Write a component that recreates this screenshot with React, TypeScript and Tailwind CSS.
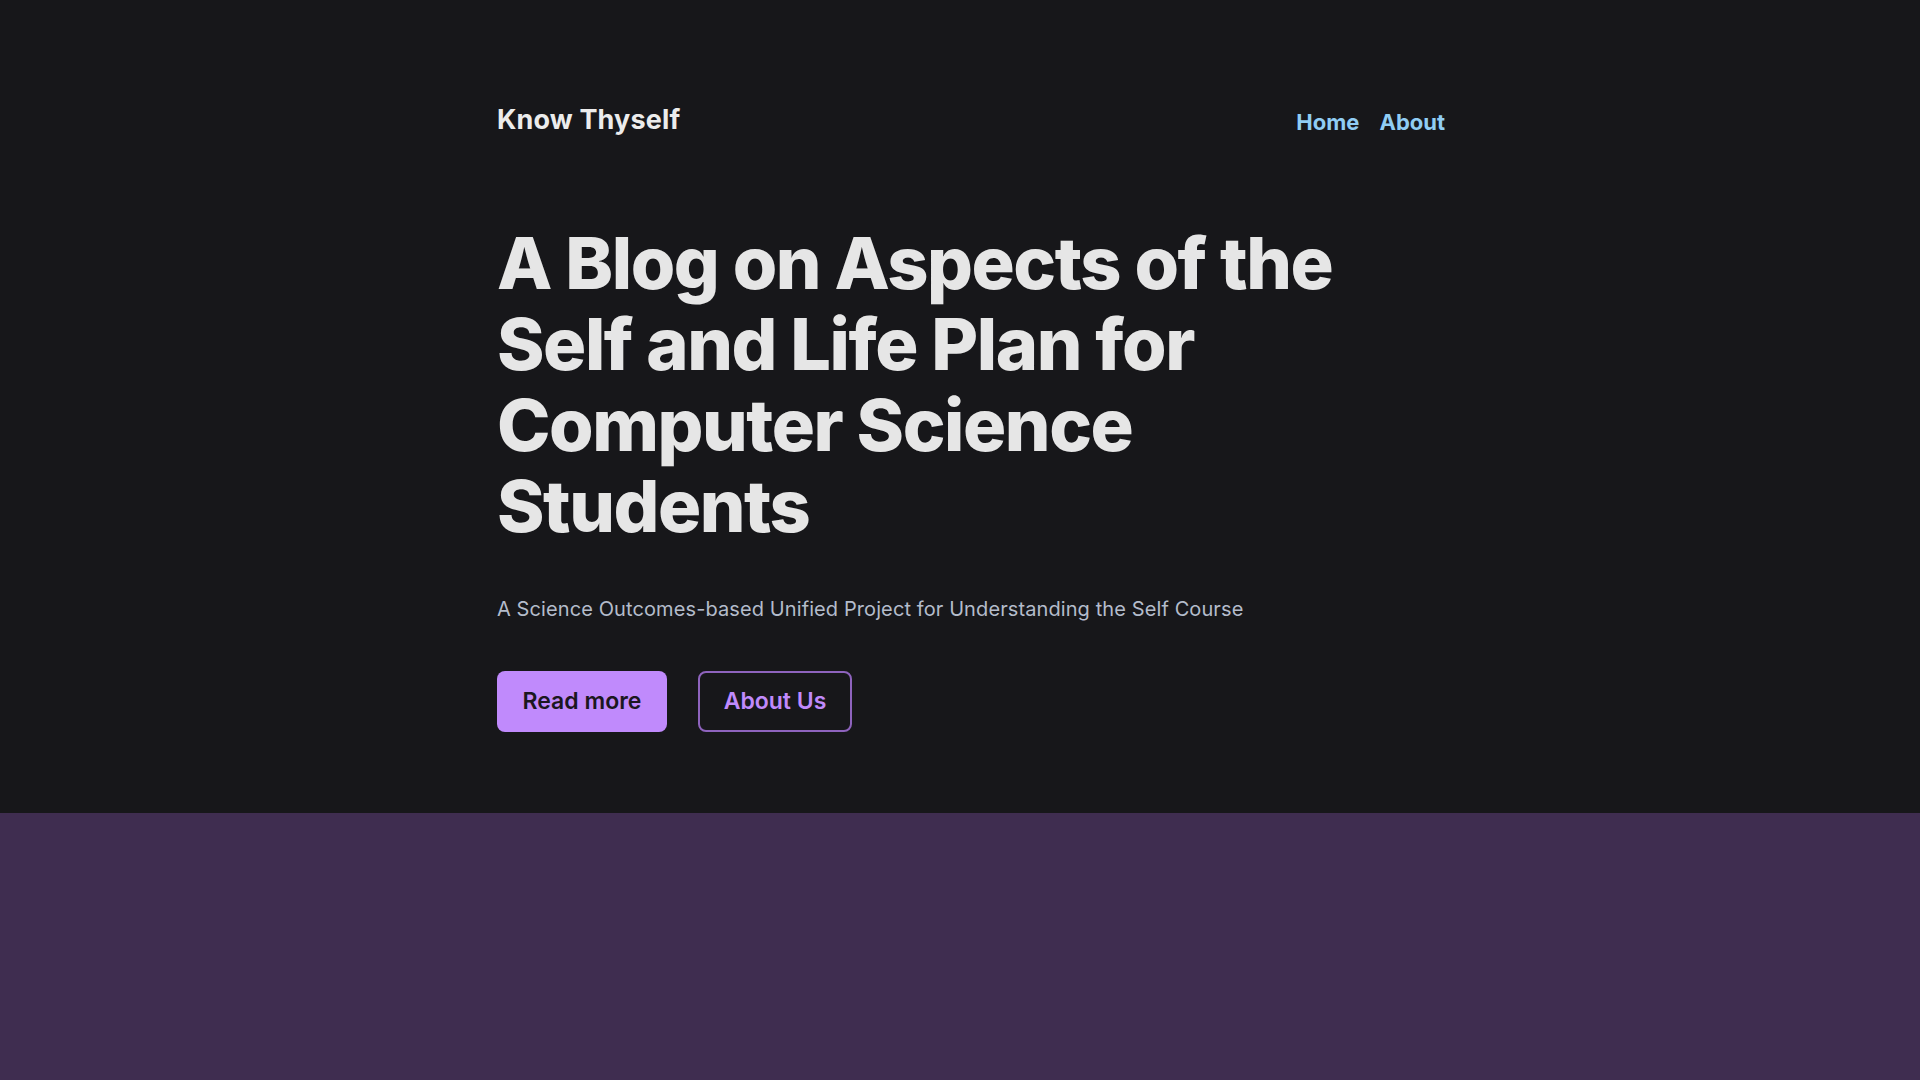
export default function App() {
  return (
    <div className="min-h-screen bg-[#3f2d50] font-['Inter',sans-serif]">
      <section className="bg-[#17171a] pb-[81px] pt-[104px]">
        <div className="ml-[497px] w-[948px]">
          <header className="flex items-center justify-between">
            <a className="text-[27px] font-bold leading-8 tracking-[0.005em] text-[#ececec]">Know Thyself</a>
            <nav className="flex items-center gap-5 pt-1">
              <a className="text-[22px] font-bold leading-7 text-[#90cdf4]">Home</a>
              <a className="text-[22px] font-bold leading-7 text-[#90cdf4]">About</a>
            </nav>
          </header>

          <h1 className="mt-[86px] text-[72px] font-extrabold leading-[81px] tracking-[-0.02em] text-[#e6e6e6]">
            A Blog on Aspects of the
            <br />
            Self and Life Plan for
            <br />
            Computer Science
            <br />
            Students
          </h1>

          <p className="mt-[49px] text-[20px] leading-7 tracking-[0.005em] text-[#b4bccb]">
            A Science Outcomes-based Unified Project for Understanding the Self Course
          </p>

          <div className="mt-12 flex items-center gap-[31px]">
            <button className="h-[61px] w-[170px] rounded-lg bg-[#c08afc] text-[23px] font-semibold text-[#1b1720]">
              Read more
            </button>
            <button className="h-[61px] w-[154px] rounded-lg border-2 border-[#8e63bd] text-[23px] font-semibold text-[#c08afc]">
              About Us
            </button>
          </div>
        </div>
      </section>
      <div className="h-[267px]" />
    </div>
  );
}
